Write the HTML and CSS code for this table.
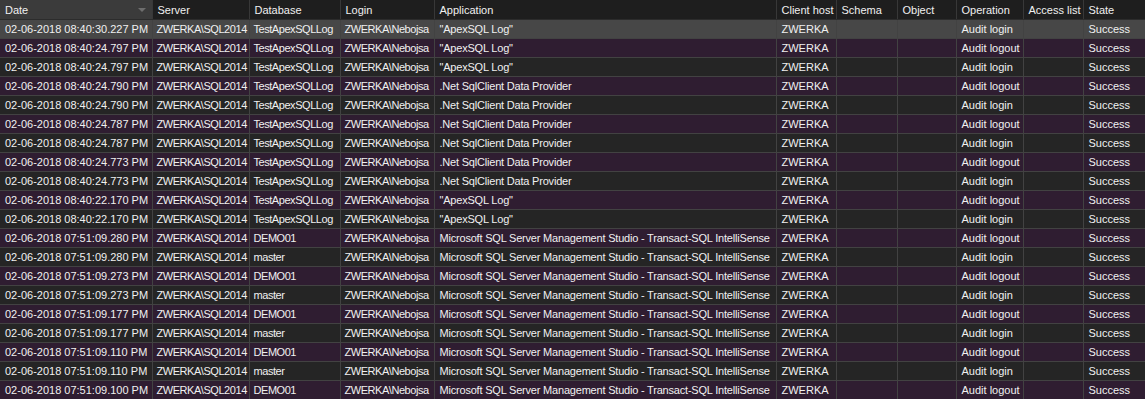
FILE: index.html
```html
<!DOCTYPE html>
<html lang="en">
<head>
    <meta charset="UTF-8">
    <title>ApexSQL Log - Audit</title>
    <link rel="stylesheet" href="styles.css">
</head>
<body>
    <table class="grid">
        <colgroup>
            <col style="width:152px"><col style="width:97px"><col style="width:91px"><col style="width:94px">
            <col style="width:342px"><col style="width:60px"><col style="width:61px"><col style="width:59px">
            <col style="width:67px"><col style="width:60px"><col style="width:62px">
        </colgroup>
        <thead>
            <tr>
                <th class="sorted">Date<span class="sort-arrow"></span></th>
                <th>Server</th><th>Database</th><th>Login</th><th>Application</th><th>Client host</th>
                <th>Schema</th><th>Object</th><th>Operation</th><th>Access list</th><th>State</th>
            </tr>
        </thead>
        <tbody>
            <tr class="selected"><td>02-06-2018 08:40:30.227 PM</td><td>ZWERKA\SQL2014</td><td>TestApexSQLLog</td><td>ZWERKA\Nebojsa</td><td>"ApexSQL Log"</td><td>ZWERKA</td><td></td><td></td><td>Audit login</td><td></td><td>Success</td></tr>
            <tr class="alt"><td>02-06-2018 08:40:24.797 PM</td><td>ZWERKA\SQL2014</td><td>TestApexSQLLog</td><td>ZWERKA\Nebojsa</td><td>"ApexSQL Log"</td><td>ZWERKA</td><td></td><td></td><td>Audit logout</td><td></td><td>Success</td></tr>
            <tr><td>02-06-2018 08:40:24.797 PM</td><td>ZWERKA\SQL2014</td><td>TestApexSQLLog</td><td>ZWERKA\Nebojsa</td><td>"ApexSQL Log"</td><td>ZWERKA</td><td></td><td></td><td>Audit login</td><td></td><td>Success</td></tr>
            <tr class="alt"><td>02-06-2018 08:40:24.790 PM</td><td>ZWERKA\SQL2014</td><td>TestApexSQLLog</td><td>ZWERKA\Nebojsa</td><td>.Net SqlClient Data Provider</td><td>ZWERKA</td><td></td><td></td><td>Audit logout</td><td></td><td>Success</td></tr>
            <tr><td>02-06-2018 08:40:24.790 PM</td><td>ZWERKA\SQL2014</td><td>TestApexSQLLog</td><td>ZWERKA\Nebojsa</td><td>.Net SqlClient Data Provider</td><td>ZWERKA</td><td></td><td></td><td>Audit login</td><td></td><td>Success</td></tr>
            <tr class="alt"><td>02-06-2018 08:40:24.787 PM</td><td>ZWERKA\SQL2014</td><td>TestApexSQLLog</td><td>ZWERKA\Nebojsa</td><td>.Net SqlClient Data Provider</td><td>ZWERKA</td><td></td><td></td><td>Audit logout</td><td></td><td>Success</td></tr>
            <tr><td>02-06-2018 08:40:24.787 PM</td><td>ZWERKA\SQL2014</td><td>TestApexSQLLog</td><td>ZWERKA\Nebojsa</td><td>.Net SqlClient Data Provider</td><td>ZWERKA</td><td></td><td></td><td>Audit login</td><td></td><td>Success</td></tr>
            <tr class="alt"><td>02-06-2018 08:40:24.773 PM</td><td>ZWERKA\SQL2014</td><td>TestApexSQLLog</td><td>ZWERKA\Nebojsa</td><td>.Net SqlClient Data Provider</td><td>ZWERKA</td><td></td><td></td><td>Audit logout</td><td></td><td>Success</td></tr>
            <tr><td>02-06-2018 08:40:24.773 PM</td><td>ZWERKA\SQL2014</td><td>TestApexSQLLog</td><td>ZWERKA\Nebojsa</td><td>.Net SqlClient Data Provider</td><td>ZWERKA</td><td></td><td></td><td>Audit login</td><td></td><td>Success</td></tr>
            <tr class="alt"><td>02-06-2018 08:40:22.170 PM</td><td>ZWERKA\SQL2014</td><td>TestApexSQLLog</td><td>ZWERKA\Nebojsa</td><td>"ApexSQL Log"</td><td>ZWERKA</td><td></td><td></td><td>Audit logout</td><td></td><td>Success</td></tr>
            <tr><td>02-06-2018 08:40:22.170 PM</td><td>ZWERKA\SQL2014</td><td>TestApexSQLLog</td><td>ZWERKA\Nebojsa</td><td>"ApexSQL Log"</td><td>ZWERKA</td><td></td><td></td><td>Audit login</td><td></td><td>Success</td></tr>
            <tr class="alt"><td>02-06-2018 07:51:09.280 PM</td><td>ZWERKA\SQL2014</td><td>DEMO01</td><td>ZWERKA\Nebojsa</td><td>Microsoft SQL Server Management Studio - Transact-SQL IntelliSense</td><td>ZWERKA</td><td></td><td></td><td>Audit logout</td><td></td><td>Success</td></tr>
            <tr><td>02-06-2018 07:51:09.280 PM</td><td>ZWERKA\SQL2014</td><td>master</td><td>ZWERKA\Nebojsa</td><td>Microsoft SQL Server Management Studio - Transact-SQL IntelliSense</td><td>ZWERKA</td><td></td><td></td><td>Audit login</td><td></td><td>Success</td></tr>
            <tr class="alt"><td>02-06-2018 07:51:09.273 PM</td><td>ZWERKA\SQL2014</td><td>DEMO01</td><td>ZWERKA\Nebojsa</td><td>Microsoft SQL Server Management Studio - Transact-SQL IntelliSense</td><td>ZWERKA</td><td></td><td></td><td>Audit logout</td><td></td><td>Success</td></tr>
            <tr><td>02-06-2018 07:51:09.273 PM</td><td>ZWERKA\SQL2014</td><td>master</td><td>ZWERKA\Nebojsa</td><td>Microsoft SQL Server Management Studio - Transact-SQL IntelliSense</td><td>ZWERKA</td><td></td><td></td><td>Audit login</td><td></td><td>Success</td></tr>
            <tr class="alt"><td>02-06-2018 07:51:09.177 PM</td><td>ZWERKA\SQL2014</td><td>DEMO01</td><td>ZWERKA\Nebojsa</td><td>Microsoft SQL Server Management Studio - Transact-SQL IntelliSense</td><td>ZWERKA</td><td></td><td></td><td>Audit logout</td><td></td><td>Success</td></tr>
            <tr><td>02-06-2018 07:51:09.177 PM</td><td>ZWERKA\SQL2014</td><td>master</td><td>ZWERKA\Nebojsa</td><td>Microsoft SQL Server Management Studio - Transact-SQL IntelliSense</td><td>ZWERKA</td><td></td><td></td><td>Audit login</td><td></td><td>Success</td></tr>
            <tr class="alt"><td>02-06-2018 07:51:09.110 PM</td><td>ZWERKA\SQL2014</td><td>DEMO01</td><td>ZWERKA\Nebojsa</td><td>Microsoft SQL Server Management Studio - Transact-SQL IntelliSense</td><td>ZWERKA</td><td></td><td></td><td>Audit logout</td><td></td><td>Success</td></tr>
            <tr><td>02-06-2018 07:51:09.110 PM</td><td>ZWERKA\SQL2014</td><td>master</td><td>ZWERKA\Nebojsa</td><td>Microsoft SQL Server Management Studio - Transact-SQL IntelliSense</td><td>ZWERKA</td><td></td><td></td><td>Audit login</td><td></td><td>Success</td></tr>
            <tr class="alt"><td>02-06-2018 07:51:09.100 PM</td><td>ZWERKA\SQL2014</td><td>DEMO01</td><td>ZWERKA\Nebojsa</td><td>Microsoft SQL Server Management Studio - Transact-SQL IntelliSense</td><td>ZWERKA</td><td></td><td></td><td>Audit logout</td><td></td><td>Success</td></tr>
        </tbody>
    </table>
</body>
</html>
```
FILE: styles.css
```css
body {
    margin: 0;
    background-color: #252525;
    font-family: 'Liberation Sans', Arial, sans-serif;
    font-size: 11px;
    color: #f0f0f0;
    overflow: hidden;
}
.grid {
    width: 1145px;
    table-layout: fixed;
    border-collapse: collapse;
}
.grid th {
    height: 19px;
    padding: 0 0 0 5px;
    background-color: #1e1e1e;
    border-right: 1px solid #383838;
    border-bottom: 1px solid #2c2c2c;
    font-weight: normal;
    text-align: left;
    white-space: nowrap;
    overflow: hidden;
    position: relative;
}
.grid th.sorted {
    background-color: #3b3b3b;
}
.sort-arrow {
    position: absolute;
    right: 6px;
    top: 8px;
    border-left: 4px solid transparent;
    border-right: 4px solid transparent;
    border-top: 4px solid #6e6e6e;
}
.grid td {
    height: 18px;
    padding: 0 0 0 5px;
    border-right: 1px solid #424242;
    border-bottom: 1px solid #424242;
    white-space: nowrap;
    overflow: hidden;
}
/* server, database, login: Tahoma caps are narrower than Arial */
.grid td:nth-child(2),
.grid td:nth-child(3),
.grid td:nth-child(4) {
    padding-left: 4px;
    letter-spacing: -0.45px;
}
.grid td:nth-child(5) {
    letter-spacing: -0.2px;
}
.grid tr.alt td {
    background-color: #2f1d31;
}
.grid tr.selected td {
    background-color: #474747;
}
```
